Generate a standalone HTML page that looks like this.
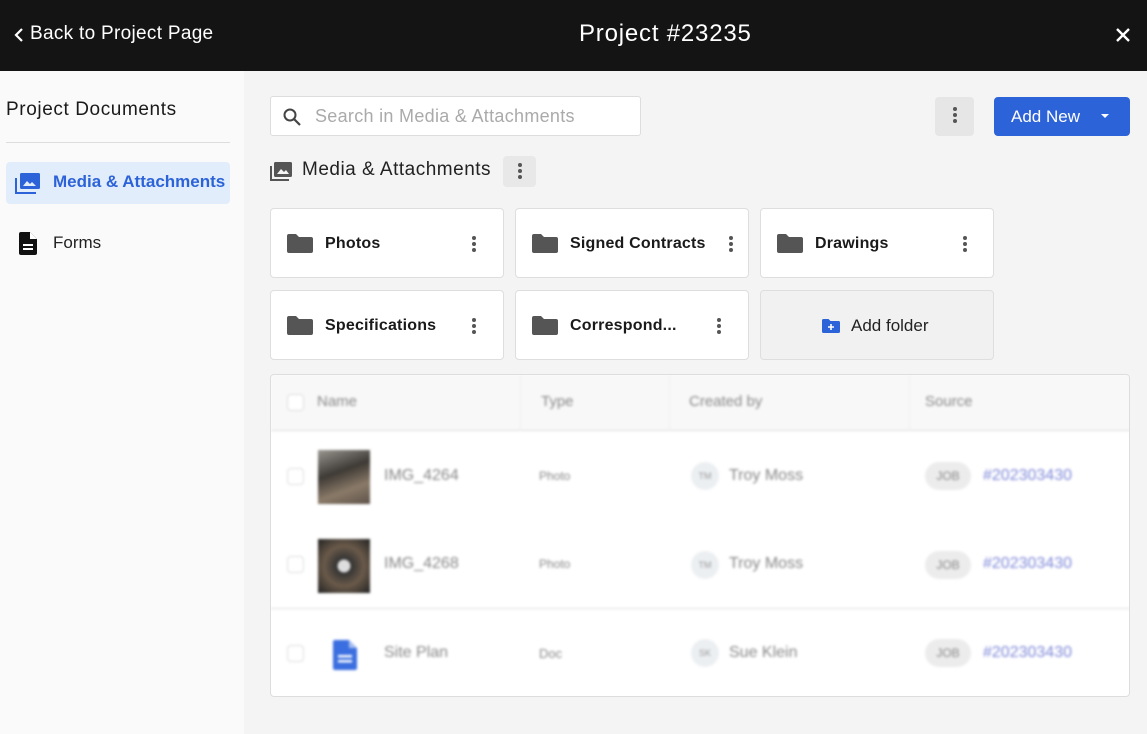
<!DOCTYPE html>
<html><head><meta charset="utf-8"><style>
*{box-sizing:border-box;margin:0;padding:0}
body{width:1147px;height:734px;overflow:hidden;font-family:"Liberation Sans",sans-serif;background:#f4f4f4;position:relative;color:#222}
.hdr{position:absolute;left:0;top:0;width:1147px;height:71px;background:#141414;color:#fff}
.abs{position:absolute}
.side{position:absolute;left:0;top:71px;width:244px;height:663px;background:#fafafa}
.card{position:absolute;width:234px;height:70px;background:#fff;border:1px solid #dedede;border-radius:4px}
.card .nm{position:absolute;left:54px;top:26px;font-weight:bold;font-size:16px;color:#1a1a1a;letter-spacing:0.2px}
.fold{position:absolute;left:16px;top:25px;width:26px;height:19px}
.kb{position:absolute;width:4px}
.kb i{display:block;width:4px;height:4px;border-radius:2px;background:#555;margin-bottom:2px}
.tbl{position:absolute;left:270px;top:374px;width:860px;height:323px;background:#fff;border:1px solid #ddd;border-radius:4px;overflow:hidden}
.blur{filter:blur(1.2px)}
.cb{position:absolute;width:17px;height:17px;border:1.5px solid #ddd;border-radius:4px;background:#fff}
.t{position:absolute;font-size:15px;color:#888}
.av{position:absolute;width:28px;height:28px;border-radius:14px;background:#eceff2;font-size:9px;color:#999;text-align:center;line-height:28px}
.job{position:absolute;width:46px;height:28px;border-radius:14px;background:#ececec;font-size:12px;color:#888;text-align:center;line-height:28px}
.lnk{position:absolute;font-size:16px;color:#7f88d8}
</style></head><body>
<div class="hdr">
<svg class="abs" style="left:14px;top:27px" width="10" height="16" viewBox="0 0 10 16"><path d="M8 2L2 8l6 6" stroke="#fff" stroke-width="2.2" fill="none"/></svg>
<div class="abs" style="left:30px;top:23px;font-size:19px;letter-spacing:0.3px">Back to Project Page</div>
<div class="abs" style="left:579px;top:20px;font-size:24px;letter-spacing:0.8px">Project #23235</div>
<svg class="abs" style="left:1115px;top:27px" width="16" height="16" viewBox="0 0 16 16"><path d="M2 2l12 12M14 2L2 14" stroke="#fff" stroke-width="2.4"/></svg>
</div>
<div class="side">
<div class="abs" style="left:6px;top:28px;font-size:19px;color:#1a1a1a;letter-spacing:0.6px">Project Documents</div>
<div class="abs" style="left:6px;top:71px;width:224px;height:1px;background:#ddd"></div>
<div class="abs" style="left:6px;top:91px;width:224px;height:42px;background:#e1edfb;border-radius:4px"></div>
<svg class="abs" style="left:15px;top:101px" width="26" height="22" viewBox="0 0 26 22"><path d="M1 6v15h20" stroke="#2d63d8" stroke-width="2" fill="none"/><rect x="5" y="1" width="20" height="16" rx="1.5" fill="#2d63d8"/><path d="M8 14l4-5 3 3 2-2 4 4z" fill="#e1edfb"/></svg>
<div class="abs" style="left:53px;top:101px;font-size:17px;font-weight:bold;color:#2d63d8">Media &amp; Attachments</div>
<svg class="abs" style="left:19px;top:161px" width="18" height="23" viewBox="0 0 18 23"><path d="M0 2a2 2 0 0 1 2-2h9l7 7v14a2 2 0 0 1-2 2H2a2 2 0 0 1-2-2z" fill="#111"/><path d="M11 0v7h7" fill="#fff"/><rect x="4" y="12" width="10" height="2" fill="#fff"/><rect x="4" y="16" width="10" height="2" fill="#fff"/></svg>
<div class="abs" style="left:53px;top:162px;font-size:17px;color:#222">Forms</div>
</div>
<div class="abs" style="left:270px;top:96px;width:371px;height:40px;background:#fff;border:1px solid #ddd;border-radius:3px">
<svg class="abs" style="left:12px;top:11px" width="18" height="18" viewBox="0 0 18 18"><circle cx="7" cy="7" r="5.5" stroke="#444" stroke-width="2" fill="none"/><path d="M11 11l6 6" stroke="#444" stroke-width="2.2"/></svg>
<div class="abs" style="left:44px;top:9px;font-size:18px;color:#aaa;letter-spacing:0.3px">Search in Media &amp; Attachments</div>
</div>
<div class="abs" style="left:935px;top:97px;width:39px;height:39px;background:#e6e6e6;border-radius:4px"><div class="kb" style="left:18px;top:10px"><i></i><i></i><i></i></div></div>
<div class="abs" style="left:994px;top:97px;width:136px;height:39px;background:#2d63d8;border-radius:4px;color:#fff;font-size:17px;line-height:39px;padding-left:17px">Add New<span style="position:absolute;left:107px;top:17px;border:4px solid transparent;border-top:4px solid #fff;border-bottom:0"></span></div>
<svg class="abs" style="left:270px;top:161px" width="23" height="20" viewBox="0 0 23 20"><path d="M1 5v14h18" stroke="#555" stroke-width="2" fill="none"/><rect x="4" y="1" width="18" height="15" rx="1.5" fill="#555"/><path d="M7 13l4-5 3 3 2-2 3 4z" fill="#f4f4f4"/></svg>
<div class="abs" style="left:302px;top:159px;font-size:19px;color:#222;letter-spacing:0.5px">Media &amp; Attachments</div>
<div class="abs" style="left:503px;top:156px;width:33px;height:31px;background:#e8e8e8;border-radius:4px"><div class="kb" style="left:15px;top:7px"><i></i><i></i><i></i></div></div>

<div class="card" style="left:270px;top:208px"><svg class="fold" viewBox="0 0 26 19"><path d="M0 2a2 2 0 0 1 2-2h7l3 3h12a2 2 0 0 1 2 2v12a2 2 0 0 1-2 2H2a2 2 0 0 1-2-2z" fill="#555"/></svg><div class="nm">Photos</div><div class="kb" style="left:201px;top:27px"><i></i><i></i><i></i></div></div>
<div class="card" style="left:515px;top:208px"><svg class="fold" viewBox="0 0 26 19"><path d="M0 2a2 2 0 0 1 2-2h7l3 3h12a2 2 0 0 1 2 2v12a2 2 0 0 1-2 2H2a2 2 0 0 1-2-2z" fill="#555"/></svg><div class="nm">Signed Contracts</div><div class="kb" style="left:213px;top:27px"><i></i><i></i><i></i></div></div>
<div class="card" style="left:760px;top:208px"><svg class="fold" viewBox="0 0 26 19"><path d="M0 2a2 2 0 0 1 2-2h7l3 3h12a2 2 0 0 1 2 2v12a2 2 0 0 1-2 2H2a2 2 0 0 1-2-2z" fill="#555"/></svg><div class="nm">Drawings</div><div class="kb" style="left:202px;top:27px"><i></i><i></i><i></i></div></div>
<div class="card" style="left:270px;top:290px"><svg class="fold" viewBox="0 0 26 19"><path d="M0 2a2 2 0 0 1 2-2h7l3 3h12a2 2 0 0 1 2 2v12a2 2 0 0 1-2 2H2a2 2 0 0 1-2-2z" fill="#555"/></svg><div class="nm">Specifications</div><div class="kb" style="left:201px;top:27px"><i></i><i></i><i></i></div></div>
<div class="card" style="left:515px;top:290px"><svg class="fold" viewBox="0 0 26 19"><path d="M0 2a2 2 0 0 1 2-2h7l3 3h12a2 2 0 0 1 2 2v12a2 2 0 0 1-2 2H2a2 2 0 0 1-2-2z" fill="#555"/></svg><div class="nm">Correspond...</div><div class="kb" style="left:201px;top:27px"><i></i><i></i><i></i></div></div>
<div class="card" style="left:760px;top:290px;background:#f1f1f1"><svg class="abs" style="left:61px;top:28px" width="18" height="14" viewBox="0 0 18 14"><path d="M0 1.5A1.5 1.5 0 0 1 1.5 0h5l2 2h8A1.5 1.5 0 0 1 18 3.5v9a1.5 1.5 0 0 1-1.5 1.5h-15A1.5 1.5 0 0 1 0 12.5z" fill="#2d63d8"/><path d="M9 5v6M6 8h6" stroke="#fff" stroke-width="1.6"/></svg><div class="abs" style="left:90px;top:25px;font-size:17px;color:#222">Add folder</div></div>

<div class="tbl"><div class="blur">
<div class="abs" style="left:0;top:0;width:860px;height:56px;background:#f8f8f8;border-bottom:1px solid #ddd"></div>
<div class="abs" style="left:249px;top:0;width:1px;height:56px;background:#eee"></div>
<div class="abs" style="left:398px;top:0;width:1px;height:56px;background:#eee"></div>
<div class="abs" style="left:638px;top:0;width:1px;height:56px;background:#eee"></div>
<div class="cb" style="left:16px;top:19px"></div>
<div class="t" style="left:46px;top:18px">Name</div><div class="t" style="left:270px;top:18px">Type</div><div class="t" style="left:418px;top:18px">Created by</div><div class="t" style="left:654px;top:18px">Source</div>

<div class="cb" style="left:16px;top:93px"></div>
<div class="abs" style="left:47px;top:75px;width:52px;height:54px;background:linear-gradient(160deg,#9a9690,#3e3a35 40%,#8a7a68 70%,#5e5248)"></div>
<div class="t" style="left:113px;top:92px;font-size:16px">IMG_4264</div><div class="t" style="left:268px;top:94px;font-size:12px">Photo</div>
<div class="av" style="left:420px;top:87px">TM</div><div class="t" style="left:458px;top:92px;font-size:16px">Troy Moss</div>
<div class="job" style="left:654px;top:87px">JOB</div><div class="lnk" style="left:712px;top:92px">#202303430</div>

<div class="cb" style="left:16px;top:181px"></div>
<div class="abs" style="left:47px;top:164px;width:52px;height:54px;background:radial-gradient(circle at 50% 50%,#ddd 0 6px,#333 7px,#6a5a4a 20px,#222)"></div>
<div class="t" style="left:113px;top:180px;font-size:16px">IMG_4268</div><div class="t" style="left:268px;top:182px;font-size:12px">Photo</div>
<div class="av" style="left:420px;top:176px">TM</div><div class="t" style="left:458px;top:180px;font-size:16px">Troy Moss</div>
<div class="job" style="left:654px;top:176px">JOB</div><div class="lnk" style="left:712px;top:180px">#202303430</div>

<div class="abs" style="left:0;top:233px;width:860px;height:1px;background:#ddd"></div>
<div class="cb" style="left:16px;top:270px"></div>
<svg class="abs" style="left:62px;top:265px" width="24" height="30" viewBox="0 0 24 30"><path d="M0 2a2 2 0 0 1 2-2h14l8 8v20a2 2 0 0 1-2 2H2a2 2 0 0 1-2-2z" fill="#3b6ee0"/><path d="M16 0v8h8" fill="#a9c0f0"/><rect x="5" y="15" width="14" height="2.5" fill="#fff"/><rect x="5" y="20" width="14" height="2.5" fill="#fff"/></svg>
<div class="t" style="left:113px;top:269px;font-size:16px">Site Plan</div><div class="t" style="left:268px;top:271px;font-size:13px">Doc</div>
<div class="av" style="left:420px;top:264px">SK</div><div class="t" style="left:458px;top:269px;font-size:16px">Sue Klein</div>
<div class="job" style="left:654px;top:264px">JOB</div><div class="lnk" style="left:712px;top:269px">#202303430</div>
</div></div>
</body></html>
